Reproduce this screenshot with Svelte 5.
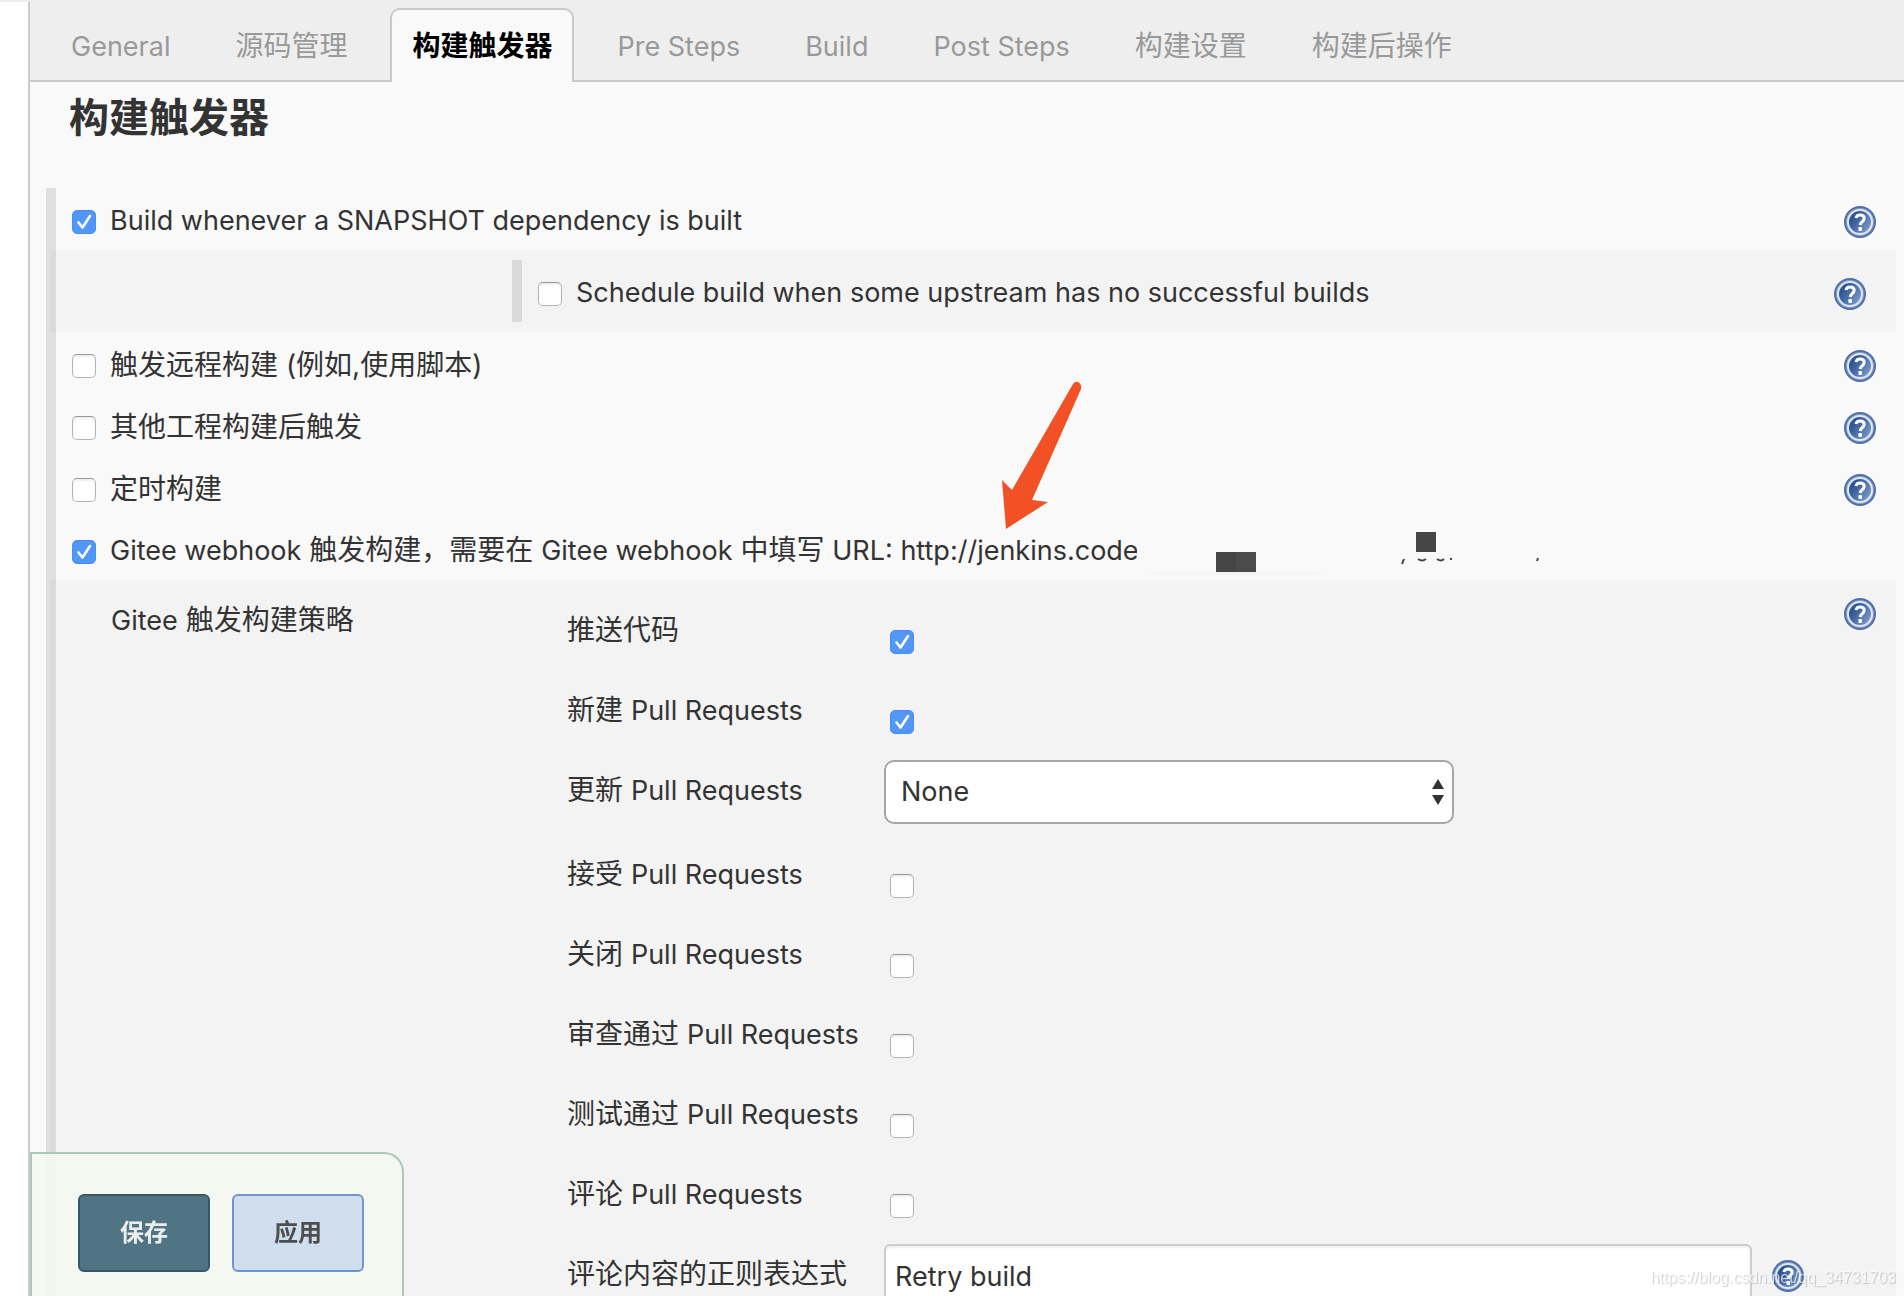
<script>
  const tabs = [
    "General",
    "源码管理",
    "构建触发器",
    "Pre Steps",
    "Build",
    "Post Steps",
    "构建设置",
    "构建后操作"
  ];
  let activeTab = $state("构建触发器");

  let snapshot = $state(true);
  let upstream = $state(false);
  let webhook = $state(true);

  let triggers = $state([
    { id: "remote", label: "触发远程构建 (例如,使用脚本)", checked: false },
    { id: "after", label: "其他工程构建后触发", checked: false },
    { id: "timer", label: "定时构建", checked: false }
  ]);

  let events = $state([
    { id: "push", label: "推送代码", value: true },
    { id: "open", label: "新建 Pull Requests", value: true },
    { id: "update", label: "更新 Pull Requests", value: "None", type: "select" },
    { id: "accept", label: "接受 Pull Requests", value: false },
    { id: "close", label: "关闭 Pull Requests", value: false },
    { id: "approve", label: "审查通过 Pull Requests", value: false },
    { id: "test", label: "测试通过 Pull Requests", value: false },
    { id: "note", label: "评论 Pull Requests", value: false },
    { id: "regex", label: "评论内容的正则表达式", value: "Retry build", type: "text" }
  ]);

  // odd items are the latin runs, which are set a size smaller than the hanzi
  const runs = text => text.split(/([A-Za-z][\x20-\x7e]*[A-Za-z:])/);
</script>

{#snippet mixed(text)}{#each runs(text) as run, i}{#if i % 2}<span class="latin">{run}</span>{:else}{run}{/if}{/each}{/snippet}

{#snippet help()}
  <a class="help" href="#help" aria-label="帮助">
    <svg viewBox="0 0 32 32" width="32" height="32">
      <defs>
        <linearGradient id="ball" x1="0" y1="0.2" x2="1" y2="0.9">
          <stop offset="0.2" stop-color="#2f5596" />
          <stop offset="1" stop-color="#86a3cf" />
        </linearGradient>
      </defs>
      <circle cx="16" cy="16" r="15" fill="#8aa3cb" stroke="#4f6fa8" stroke-width="2" />
      <circle cx="16" cy="16" r="12" fill="url(#ball)" stroke="#dfe7f3" stroke-width="2" />
      <path
        d="M12 12C12.400 9.800 13.800 9 16 9c2.600 0 4.200 1.200 4.200 3.300 0 3.200-3.700 3.400-4 6.700"
        fill="none"
        stroke="#fff"
        stroke-width="3" />
      <rect x="14.400" y="21" width="3.600" height="4" rx="1" fill="#fff" />
    </svg>
  </a>
{/snippet}

<div class="page">
  <nav class="tabs">
    {#each tabs as tab}
      <button class="tab" class:active={tab === activeTab} onclick={() => (activeTab = tab)}>
        {@render mixed(tab)}
      </button>
    {/each}
  </nav>

  <h1>构建触发器</h1>

  <form>
    <div class="row">
      <input id="snapshot" type="checkbox" bind:checked={snapshot} />
      <label for="snapshot">{@render mixed("Build whenever a SNAPSHOT dependency is built")}</label>
      {@render help()}
    </div>

    <div class="shade nested">
      <div class="row">
        <input id="upstream" type="checkbox" bind:checked={upstream} />
        <label for="upstream">
          {@render mixed("Schedule build when some upstream has no successful builds")}
        </label>
        {@render help()}
      </div>
    </div>

    {#each triggers as trigger}
      <div class="row">
        <input id={trigger.id} type="checkbox" bind:checked={trigger.checked} />
        <label for={trigger.id}>{@render mixed(trigger.label)}</label>
        {@render help()}
      </div>
    {/each}

    <div class="row webhook">
      <input id="webhook" type="checkbox" bind:checked={webhook} />
      <label for="webhook">
        {@render mixed("Gitee webhook 触发构建，需要在 Gitee webhook 中填写 URL: http://jenkins.code")}
      </label>
      <svg class="redacted" viewBox="0 0 420 62" width="420" height="62" aria-hidden="true">
        <path d="M0 0h420v62H0z" fill="#f9f9f9" />
        <path d="M12 54h176q-10 3-24 3H30q-12 0-18-3z" fill="#f3f3f3" />
        <path d="M79 34h20v20H79z" fill="#454545" />
        <path d="M99 34h20v20H99z" fill="#4b4b4b" />
        <path d="M279 14h20v20h-20z" fill="#454545" />
        <path
          d="M267 41l-2 5M281 41q4 3 8 0M300 41q4 3 7 0M313 41h2M401 40l-1 3"
          fill="none"
          stroke="#444"
          stroke-width="2" />
      </svg>
      <svg class="arrow" viewBox="0 0 84 150" width="84" height="150" aria-hidden="true">
        <path d="M73 3Q75 0 78 1Q82 3 81 8L32 119L48 121L6 148L2 99L12 109Z" fill="#f15124" />
      </svg>
    </div>

    <div class="shade strategy">
      <span class="title">{@render mixed("Gitee 触发构建策略")}</span>
      <div class="events">
        {#each events as event}
          <div class="event">
            <label for={event.id}>{@render mixed(event.label)}</label>
            {#if event.type === "select"}
              <div class="select">
                <select id={event.id} bind:value={event.value}>
                  <option>None</option>
                </select>
                <svg viewBox="0 0 14 26" width="14" height="26" aria-hidden="true">
                  <path d="M7 0l6 10H1zM7 26l6-10H1z" fill="#333" />
                </svg>
              </div>
            {:else if event.type === "text"}
              <input id={event.id} type="text" bind:value={event.value} />
              {@render help()}
            {:else}
              <input id={event.id} type="checkbox" bind:checked={event.value} />
            {/if}
          </div>
        {/each}
      </div>
      {@render help()}
    </div>
  </form>

  <div class="actions">
    <button class="save">保存</button>
    <button class="apply">应用</button>
  </div>

  <span class="watermark">https://blog.csdn.net/qq_34731703</span>
</div>

<style>
  :global(body) {
    border-top: 2px solid #e8eef2;
    background: #fff;
  }
  .page {
    box-sizing: border-box;
    height: calc(100vh - 2px);
    overflow: hidden;
    margin-left: 28px;
    border-left: 2px solid #ccc;
    background: #f9f9f9;
    color: #333;
    font-family: Inter, "Noto Sans CJK SC", sans-serif;
    font-size: 28px;
    line-height: 40px;
  }
  .latin {
    font-size: 27px;
  }
  button,
  select,
  input {
    font: inherit;
    color: inherit;
  }

  .tabs {
    display: flex;
    align-items: flex-end;
    gap: 21px;
    box-sizing: border-box;
    height: 80px;
    padding-left: 19px;
    border-bottom: 2px solid #c9c9c9;
    background: #eee;
  }
  .tab {
    box-sizing: border-box;
    height: 74px;
    margin-bottom: -2px;
    padding: 0 20px;
    border: 2px solid transparent;
    border-bottom: 0;
    border-radius: 10px 10px 0 0;
    background: none;
    color: #999;
    white-space: nowrap;
  }
  .tab.active {
    border-color: #c9c9c9;
    background: #f9f9f9;
    color: #000;
    font-weight: bold;
  }

  h1 {
    margin: 0;
    padding: 12px 39px 46px;
    font-size: 40px;
    line-height: 48px;
    font-weight: bold;
  }

  form {
    margin: 0 8px 0 16px;
    border-left: 10px solid #e0e0e0;
  }
  .row {
    position: relative;
    display: flex;
    align-items: center;
    height: 62px;
    padding: 0 20px 0 16px;
    white-space: nowrap;
  }
  .row label {
    margin: 3px auto 0 14px;
  }
  .row .help {
    margin-top: 6px;
  }
  .help,
  .help svg {
    display: block;
    flex: none;
  }

  input[type="checkbox"] {
    flex: none;
    box-sizing: border-box;
    width: 24px;
    height: 24px;
    margin: 6px 0 0;
    appearance: none;
    border: 1px solid #b4b4b4;
    border-top-color: #999;
    border-radius: 5px;
    background: #fff;
    box-shadow: inset 0 2px 2px #eee;
  }
  input[type="checkbox"]:checked {
    border-color: #478ff2;
    box-shadow: none;
    background: #5097f7
      url("data:image/svg+xml,%3Csvg xmlns='http://www.w3.org/2000/svg' viewBox='0 0 22 22'%3E%3Cpath d='M5.500 11.500l4 5 7.500-11.500' fill='none' stroke='%23fff' stroke-width='2.600' stroke-linecap='round' stroke-linejoin='round'/%3E%3C/svg%3E");
  }

  .shade {
    margin-left: -6px;
    border-left: 6px solid #dadada;
    background: #f3f3f3;
  }
  .nested {
    padding: 10px 10px 10px 456px;
  }
  .nested .row {
    border-left: 10px solid #dadada;
  }

  .webhook label {
    flex: none;
    width: 1027px;
    margin-right: 0;
  }
  .redacted {
    position: relative;
    flex: none;
    margin-right: auto;
  }
  .arrow {
    position: absolute;
    left: 944px;
    top: -137px;
  }

  .strategy {
    display: flex;
    align-items: flex-start;
    padding: 10px 20px 10px 55px;
  }
  .strategy > .help {
    margin: 8px 0 0 40px;
  }
  .title {
    flex: none;
    width: 456px;
    padding-top: 10px;
  }
  .events {
    flex: 1;
  }
  .event {
    display: flex;
    align-items: flex-start;
    min-height: 80px;
  }
  .event label {
    flex: none;
    width: 317px;
    padding-top: 20px;
    white-space: nowrap;
  }
  .event input[type="checkbox"] {
    margin: 40px 0 0 6px;
  }
  .event .help {
    margin: 26px 0 0 20px;
  }
  .event input[type="text"] {
    flex: 1;
    box-sizing: border-box;
    height: 64px;
    margin-top: 10px;
    padding: 0 9px;
    border: 2px solid #ccc;
    border-radius: 6px;
    background: #fff;
    box-shadow: inset 0 2px 2px #eee;
    font-size: 27px;
  }
  .select {
    display: flex;
    align-items: center;
    width: 570px;
    margin: 10px 0;
  }
  .select select {
    flex: 1;
    height: 64px;
    padding: 0 15px;
    appearance: none;
    border: 2px solid #a6a6a6;
    border-radius: 10px;
    background: #fff;
    font-size: 27px;
  }
  .select svg {
    margin: 0 9px 0 -23px;
    pointer-events: none;
  }

  .actions {
    position: fixed;
    left: 30px;
    bottom: 0;
    display: flex;
    gap: 22px;
    padding: 40px 38px 24px 46px;
    border: 2px solid #abc9b9;
    border-bottom: 0;
    border-radius: 0 20px 0 0;
    background: rgba(244, 248, 239, 0.9);
  }
  .actions button {
    width: 132px;
    height: 78px;
    padding: 0;
    border: 2px solid;
    border-radius: 6px;
    font-size: 24px;
    font-weight: bold;
  }
  .actions .save {
    border-color: #3a5563;
    background: #4f7585;
    color: #eee;
  }
  .actions .apply {
    border-color: #6d97cc;
    background: #d0dded;
    color: #4d4d4d;
  }

  .watermark {
    position: fixed;
    right: 8px;
    bottom: 8px;
    color: rgba(255, 255, 255, 0.7);
    font-family: "Liberation Sans", Arial, sans-serif;
    font-size: 16px;
    line-height: 20px;
    text-shadow: 1px 1px 1px rgba(0, 0, 0, 0.2);
  }
</style>
